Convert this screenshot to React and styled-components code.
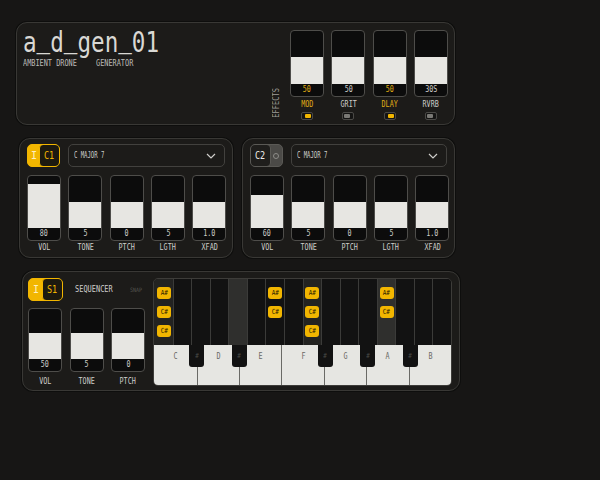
import React from "react";
import styled, { createGlobalStyle } from "styled-components";

const AMBER = "#f2b600";

const GlobalStyle = createGlobalStyle`
  html, body {
    margin: 0;
    background: #171615;
  }
  body {
    font-family: "DejaVu Sans Mono", "Liberation Mono", monospace;
  }
`;

const Page = styled.div`
  width: 600px;
  height: 480px;
  display: flex;
  flex-direction: column;
  align-items: flex-start;
`;

const Panel = styled.section`
  box-sizing: border-box;
  background: #1c1b19;
  border: 1px solid #393835;
  border-radius: 11px;
  box-shadow: 0 0 0 1px #0e0e0d;
`;

const TopPanel = styled(Panel)`
  margin: 22px 0 0 16px;
  width: 439px;
  height: 103px;
  display: flex;
  align-items: flex-start;
  justify-content: space-between;
  padding: 0 6px 0 6px;
`;

const ChannelRow = styled.div`
  display: flex;
  gap: 9px;
  margin: 13px 0 0 19px;
`;

const ChannelPanel = styled(Panel)`
  width: ${(p) => p.$w}px;
  height: 120px;
  padding: 5px 7px 0 7px;
  display: flex;
  flex-direction: column;
  gap: 8px;
`;

const SeqPanel = styled(Panel)`
  margin: 13px 0 0 22px;
  width: 438px;
  height: 120px;
  padding: 6px 7px 0 5px;
  display: flex;
  gap: 8px;
`;

const Txt = styled.span`
  display: inline-block;
  font-size: ${(p) => p.$size || 8}px;
  line-height: ${(p) => p.$size || 8}px;
  color: ${(p) => p.$color || "#cfcecb"};
  transform: scaleX(${(p) => p.$sx || 0.84});
  transform-origin: ${(p) => p.$origin || "center"} center;
  white-space: nowrap;
`;

const TitleBlock = styled.div`
  margin-top: 6px;
  display: flex;
  flex-direction: column;
  gap: 3px;
`;

const Title = styled.h1`
  margin: 0;
  height: 28px;
  font-weight: 400;
  font-size: 28px;
  line-height: 28px;
  color: #d9d8d4;
  transform: scaleX(0.807);
  transform-origin: left center;
  white-space: nowrap;
`;

const Under = styled.span`
  vertical-align: 5px;
  line-height: 0;
`;

const Subtitle = styled.div`
  display: flex;
  gap: 10px;
`;

const Effects = styled.div`
  margin-top: 7px;
  display: flex;
  align-items: flex-end;
  gap: 9px;
`;

const VerticalLabel = styled.span`
  writing-mode: vertical-rl;
  font-size: 8px;
  line-height: 8px;
  color: #9c9b97;
  transform: rotate(180deg) scaleY(0.88);
  margin-bottom: 0;
`;

const FaderRow = styled.div`
  display: flex;
  gap: ${(p) => p.$gap || 7.33}px;
`;

const FaderCol = styled.div`
  width: 34px;
  display: flex;
  flex-direction: column;
  align-items: center;
`;

const Track = styled.div`
  box-sizing: border-box;
  width: 34px;
  height: ${(p) => p.$h}px;
  border: 1px solid #4e4d4a;
  border-radius: 4px;
  background: #0c0c0c;
  display: flex;
  flex-direction: column;
  overflow: hidden;
`;

const Well = styled.div`
  flex: 1;
  display: flex;
  flex-direction: column;
  justify-content: flex-end;
`;

const Fill = styled.div`
  background: #e7e6e2;
`;

const ValueBox = styled.div`
  height: 12px;
  display: flex;
  align-items: center;
  justify-content: center;
`;

const LabelBox = styled.div`
  margin-top: ${(p) => p.$mt}px;
  height: 8px;
  display: flex;
  justify-content: center;
`;

const Mini = styled.span`
  box-sizing: border-box;
  margin-top: 3px;
  width: 12px;
  height: 8px;
  padding: 1px;
  border: 1px solid #4a4946;
  border-radius: 2px;
  background: #141413;
  display: flex;
  justify-content: ${(p) => (p.$on ? "flex-end" : "flex-start")};
`;

const MiniDot = styled.span`
  width: 6px;
  height: 100%;
  border-radius: 1px;
  background: ${(p) => (p.$on ? AMBER : "#7a7975")};
`;

const Fader = ({ h, value, label, pct, accent, toggle, mt = 4 }) => {
  const color = accent ? "#e0ad14" : "#cfcecb";
  return (
    <FaderCol>
      <Track $h={h}>
        <Well>
          <Fill style={{ height: `${pct}%` }} />
        </Well>
        <ValueBox>
          <Txt $color={color}>{value}</Txt>
        </ValueBox>
      </Track>
      <LabelBox $mt={mt}>
        <Txt $color={color}>{label}</Txt>
      </LabelBox>
      {toggle !== undefined && (
        <Mini $on={toggle}>
          <MiniDot $on={toggle} />
        </Mini>
      )}
    </FaderCol>
  );
};

const Header = styled.div`
  display: flex;
  align-items: center;
  gap: ${(p) => p.$gap || 8}px;
`;

const SwitchBox = styled.div`
  box-sizing: border-box;
  width: ${(p) => p.$w}px;
  height: 23px;
  flex: none;
  border-radius: 5px;
  border: 1px solid ${(p) => (p.$on ? AMBER : "#5a5955")};
  background: ${(p) => (p.$on ? AMBER : "#4b4a47")};
  display: flex;
  flex-direction: ${(p) => (p.$on ? "row" : "row-reverse")};
  overflow: hidden;
`;

const SwitchMark = styled.span`
  flex: 1;
  display: flex;
  align-items: center;
  justify-content: center;
  font-size: 10px;
  color: ${(p) => (p.$on ? "#fff0c0" : "#8d8c88")};
`;

const Ring = styled.span`
  width: 4px;
  height: 4px;
  border: 1px solid #8d8c88;
  border-radius: 50%;
`;

const Knob = styled.span`
  box-sizing: border-box;
  width: 21px;
  margin: -1px;
  border-radius: 4px;
  border: 1px solid ${(p) => (p.$on ? AMBER : "#5a5955")};
  background: ${(p) => (p.$on ? "#1d1a10" : "#1f1e1c")};
  display: flex;
  align-items: center;
  justify-content: center;
`;

const Switch = ({ on, label, w = 33 }) => (
  <SwitchBox $on={on} $w={w}>
    <SwitchMark $on={on}>{on ? "I" : <Ring />}</SwitchMark>
    <Knob $on={on}>
      <Txt $size={10} $sx={0.85} $color={on ? AMBER : "#ecebe7"}>
        {label}
      </Txt>
    </Knob>
  </SwitchBox>
);

const Select = styled.div`
  box-sizing: border-box;
  flex: 1;
  height: 23px;
  border: 1px solid #42413e;
  border-radius: 5px;
  padding: 0 8px 0 5px;
  display: flex;
  align-items: center;
  justify-content: space-between;
`;

const Chevron = () => (
  <svg width="10" height="6" viewBox="0 0 10 6">
    <path d="M1 1 L5 5 L9 1" fill="none" stroke="#cfcecb" strokeWidth="1.2" />
  </svg>
);

const Channel = ({ name, on, w, vol, volPct }) => (
  <ChannelPanel $w={w}>
    <Header>
      <Switch on={on} label={name} />
      <Select>
        <Txt $size={8} $sx={0.7} $origin="left">
          C MAJOR 7
        </Txt>
        <Chevron />
      </Select>
    </Header>
    <FaderRow>
      <Fader h={66} value={vol} label="VOL" pct={volPct} mt={3} />
      <Fader h={66} value="5" label="TONE" pct={50} mt={3} />
      <Fader h={66} value="0" label="PTCH" pct={50} mt={3} />
      <Fader h={66} value="5" label="LGTH" pct={50} mt={3} />
      <Fader h={66} value="1.0" label="XFAD" pct={50} mt={3} />
    </FaderRow>
  </ChannelPanel>
);

const SeqLeft = styled.div`
  width: 118px;
  display: flex;
  flex-direction: column;
  gap: 7px;
`;

const Grid = styled.div`
  box-sizing: border-box;
  width: 301px;
  height: 108px;
  border: 1px solid #3d3c39;
  border-radius: 5px;
  overflow: hidden;
  display: flex;
  flex-direction: column;
`;

const Steps = styled.div`
  flex: 1;
  display: grid;
  grid-template-columns: repeat(16, 1fr);
`;

const Step = styled.div`
  background: ${(p) => (p.$tone === 2 ? "#2f2f2d" : p.$tone === 1 ? "#232321" : "#121212")};
  border-left: 1px solid ${(p) => (p.$first ? "transparent" : "#3b3b39")};
  display: flex;
  flex-direction: column;
  align-items: center;
  padding-top: 8px;
  gap: 7px;
`;

const Chip = styled.span`
  width: 14px;
  height: 12px;
  border-radius: 3px;
  background: ${AMBER};
  display: flex;
  align-items: center;
  justify-content: center;
`;

const Keys = styled.div`
  position: relative;
  height: 40px;
  display: flex;
  background: #e6e6e2;
`;

const WhiteKey = styled.div`
  flex: 1;
  border-left: 1px solid ${(p) => (p.$first ? "transparent" : "#6a6a66")};
  display: flex;
  justify-content: center;
  padding-top: 8px;
`;

const BlackKey = styled.div`
  position: absolute;
  top: 0;
  width: 15px;
  height: 22px;
  background: #121212;
  border-radius: 0 0 3px 3px;
  display: flex;
  justify-content: center;
  padding-top: 8px;
  box-sizing: border-box;
`;

const chips = { 0: ["A#", "C#", "C#"], 6: ["A#", "C#"], 8: ["A#", "C#", "C#"], 12: ["A#", "C#"] };
const tones = { 0: 1, 4: 2, 8: 1, 12: 2 };
const whites = ["C", "D", "E", "F", "G", "A", "B"];
const blacks = [1, 2, 4, 5, 6];
const KEY_W = 299 / 7;

export default function App() {
  return (
    <Page>
      <GlobalStyle />
      <TopPanel>
        <TitleBlock>
          <Title>
            a<Under>_</Under>d<Under>_</Under>gen<Under>_</Under>01
          </Title>
          <Subtitle>
            <Txt $origin="left" $sx={0.86} $color="#bdbcb8">AMBIENT DRONE</Txt>
            <Txt $origin="left" $sx={0.86} $color="#bdbcb8">GENERATOR</Txt>
          </Subtitle>
        </TitleBlock>
        <Effects>
          <VerticalLabel>EFFECTS</VerticalLabel>
          <FaderRow>
            <Fader h={67} value="50" label="MOD" pct={51} accent toggle={true} />
            <Fader h={67} value="50" label="GRIT" pct={51} toggle={false} />
            <Fader h={67} value="50" label="DLAY" pct={51} accent toggle={true} />
            <Fader h={67} value="30S" label="RVRB" pct={51} toggle={false} />
          </FaderRow>
        </Effects>
      </TopPanel>

      <ChannelRow>
        <Channel name="C1" on w={214} vol="80" volPct={84} />
        <Channel name="C2" on={false} w={213} vol="60" volPct={63} />
      </ChannelRow>

      <SeqPanel>
        <SeqLeft>
          <Header $gap={12}>
            <Switch on label="S1" w={35} />
            <Txt $origin="left" $sx={0.87}>SEQUENCER</Txt>
            <Txt $origin="left" $size={6} $sx={0.83} $color="#55544f">SNAP</Txt>
          </Header>
          <FaderRow $gap={7.5}>
            <Fader h={64} value="50" label="VOL" pct={53} mt={6} />
            <Fader h={64} value="5" label="TONE" pct={53} mt={6} />
            <Fader h={64} value="0" label="PTCH" pct={53} mt={6} />
          </FaderRow>
        </SeqLeft>
        <Grid>
          <Steps>
            {Array.from({ length: 16 }, (_, i) => (
              <Step key={i} $first={i === 0} $tone={tones[i] || 0}>
                {(chips[i] || []).map((n, j) => (
                  <Chip key={j}>
                    <Txt $size={7} $sx={0.85} $color="#2b2100">{n}</Txt>
                  </Chip>
                ))}
              </Step>
            ))}
          </Steps>
          <Keys>
            {whites.map((n, i) => (
              <WhiteKey key={n} $first={i === 0}>
                <Txt $color="#6a6965">{n}</Txt>
              </WhiteKey>
            ))}
            {blacks.map((b) => (
              <BlackKey key={b} style={{ left: `${b * KEY_W - 7.5}px` }}>
                <Txt $size={7} $color="#4a4a47">#</Txt>
              </BlackKey>
            ))}
          </Keys>
        </Grid>
      </SeqPanel>
    </Page>
  );
}
